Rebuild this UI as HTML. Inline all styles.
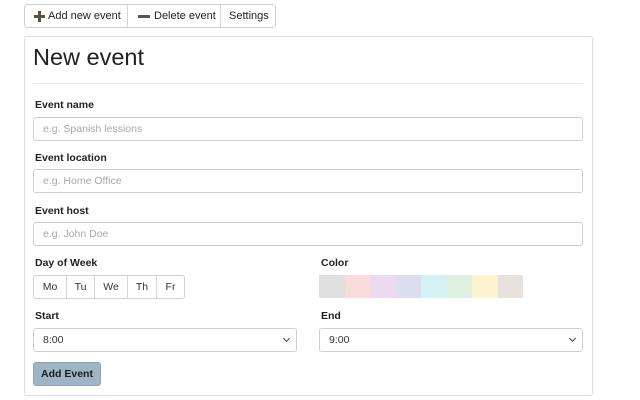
<!DOCTYPE html>
<html><head><meta charset="utf-8"><style>
*{box-sizing:border-box;margin:0;padding:0}
body{width:640px;height:400px;background:#fff;font-family:"Liberation Sans",sans-serif;color:#212529;position:relative;overflow:hidden}
.a{position:absolute;white-space:nowrap}
.tb{left:24px;top:4px;width:252px;height:24px;border:1px solid #cfcfcf;border-radius:3px;display:flex;font-size:11px;color:#222}
.tb div{height:100%;display:flex;align-items:center;padding:0 8px;border-right:1px solid #d6d6d6;white-space:nowrap}
.tb div:last-child{border-right:none}
.card{left:24px;top:36px;width:569px;height:360px;border:1px solid #dcdcdc;border-radius:3px}
h1{position:absolute;left:33px;top:44px;font-size:23.5px;font-weight:400;color:#222}
.hr{left:33px;top:83px;width:550px;height:1px;background:#e6e6e6}
.lb{font-size:10.5px;font-weight:700;color:#222}
.in{height:24px;border:1px solid #cfcfcf;border-radius:3px;font-size:10.5px;color:#a8a8a8;padding:0 9px;display:flex;align-items:center}
.days{left:33px;top:275px;height:24px;border:1px solid #d0d0d0;border-radius:3px;display:flex;font-size:10.5px;color:#333}
.days div{display:flex;align-items:center;justify-content:center;border-right:1px solid #d6d6d6;height:100%}
.days div:last-child{border-right:none}
.sw{top:275px;height:23px;width:25.5px}
.sel{color:#333;justify-content:space-between}
.chev{width:5px;height:5px;border-right:1px solid #444;border-bottom:1px solid #444;transform:rotate(45deg);margin-top:-3px;margin-right:-2px}
</style></head><body>
<div class="a tb">
<div style="width:103px;padding-left:9px"><span style="position:relative;width:11px;height:11px;margin-right:3px;display:inline-block;flex:none"><span style="position:absolute;left:4px;top:0;width:3px;height:11px;background:#5a5048"></span><span style="position:absolute;left:0;top:4px;width:11px;height:3px;background:#5a5048"></span></span>Add new event</div>
<div style="width:93px;padding-left:10px"><span style="width:12px;height:3px;background:#555;display:inline-block;margin-right:4px;flex:none"></span>Delete event</div>
<div style="width:55px">Settings</div>
</div>
<div class="a card"></div>
<h1>New event</h1>
<div class="a hr"></div>
<div class="a lb" style="left:35px;top:99px">Event name</div>
<div class="a in" style="left:33px;top:117px;width:550px">e.g. Spanish lessions</div>
<div class="a lb" style="left:35px;top:152px">Event location</div>
<div class="a in" style="left:33px;top:169px;width:550px">e.g. Home Office</div>
<div class="a lb" style="left:35px;top:205px">Event host</div>
<div class="a in" style="left:33px;top:222px;width:550px">e.g. John Doe</div>
<div class="a lb" style="left:35px;top:257px">Day of Week</div>
<div class="a days"><div style="width:33px">Mo</div><div style="width:28px">Tu</div><div style="width:33px">We</div><div style="width:29px">Th</div><div style="width:27px">Fr</div></div>
<div class="a lb" style="left:321px;top:257px">Color</div>
<div class="a sw" style="left:319px;background:#e0e0e0"></div>
<div class="a sw" style="left:344.5px;background:#fadcdc"></div>
<div class="a sw" style="left:370px;background:#ecdaf0"></div>
<div class="a sw" style="left:395.5px;background:#dcdeef"></div>
<div class="a sw" style="left:421px;background:#d4f1f4"></div>
<div class="a sw" style="left:446.5px;background:#dfefe0"></div>
<div class="a sw" style="left:472px;background:#fdf3d0"></div>
<div class="a sw" style="left:497.5px;background:#e7e2de"></div>
<div class="a lb" style="left:35px;top:310px">Start</div>
<div class="a in sel" style="left:33px;top:328px;width:264px">8:00<span class="chev"></span></div>
<div class="a lb" style="left:321px;top:310px">End</div>
<div class="a in sel" style="left:319px;top:328px;width:264px">9:00<span class="chev"></span></div>
<div class="a" style="left:33px;top:362px;width:68px;height:24px;background:#9fb5c5;border:1px solid #8aa3b5;border-radius:3px;font-size:10.5px;font-weight:700;color:#1a1a1a;display:flex;align-items:center;justify-content:center">Add Event</div>
</body></html>
